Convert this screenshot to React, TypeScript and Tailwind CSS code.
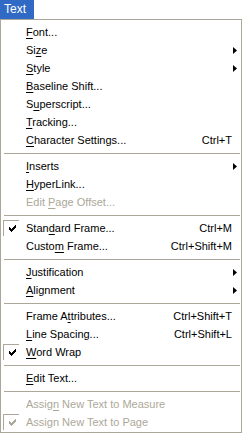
import React from 'react';

type Item =
    | { sep: true }
    | {
          sep?: false;
          label: string;
          u?: number; // index of underlined access key
          shortcut?: string;
          sub?: boolean;
          checked?: boolean;
          disabled?: boolean;
      };

const items: Item[] = [
    { label: 'Font...', u: 0 },
    { label: 'Size', u: 2, sub: true },
    { label: 'Style', u: 0, sub: true },
    { label: 'Baseline Shift...', u: 0 },
    { label: 'Superscript...', u: 1 },
    { label: 'Tracking...', u: 0 },
    { label: 'Character Settings...', u: 0, shortcut: 'Ctrl+T' },
    { sep: true },
    { label: 'Inserts', u: 0, sub: true },
    { label: 'HyperLink...', u: 0 },
    { label: 'Edit Page Offset...', u: 5, disabled: true },
    { sep: true },
    { label: 'Standard Frame...', u: 4, shortcut: 'Ctrl+M', checked: true },
    { label: 'Custom Frame...', u: 5, shortcut: 'Ctrl+Shift+M' },
    { sep: true },
    { label: 'Justification', u: 0, sub: true },
    { label: 'Alignment', u: 0, sub: true },
    { sep: true },
    { label: 'Frame Attributes...', u: 7, shortcut: 'Ctrl+Shift+T' },
    { label: 'Line Spacing...', u: 0, shortcut: 'Ctrl+Shift+L' },
    { label: 'Word Wrap', u: 0, checked: true },
    { sep: true },
    { label: 'Edit Text...', u: 0 },
    { sep: true },
    { label: 'Assign New Text to Measure', u: 5, disabled: true },
    { label: 'Assign New Text to Page', disabled: true, checked: true },
];

function Label({ text, u }: { text: string; u?: number }) {
    if (u === undefined) return <>{text}</>;
    return (
        <>
            {text.slice(0, u)}
            <span className="underline underline-offset-[2px]">{text[u]}</span>
            {text.slice(u + 1)}
        </>
    );
}

function Check({ disabled }: { disabled?: boolean }) {
    return (
        <div className="w-[16px] h-[16px] ml-[2px] border-l border-t border-[#aca899] flex items-center justify-center">
            <svg width="7" height="7" viewBox="0 0 7 7" className="ml-[1px]">
                <path
                    d="M0 2h1v1h1v1h1v-1h1v-1h1v-1h1v-1h1v3h-1v1h-1v1h-1v1h-1v1h-1v-1h-1v-1h-1v-1h-1z"
                    fill={disabled ? '#aca899' : '#000'}
                />
            </svg>
        </div>
    );
}

function Arrow() {
    return (
        <svg width="4" height="7" viewBox="0 0 4 7" className="ml-[1px]">
            <path d="M0 0L4 3.5L0 7z" fill="#000" />
        </svg>
    );
}

export default function App() {
    return (
        <div className="w-[246px] h-[433px] bg-white text-[11px] text-black" style={{ fontFamily: '"Liberation Sans", Arial, sans-serif' }}>
            {/* Menu bar title */}
            <div className="h-[19px] w-[34px] bg-[#316ac5] text-white pl-[4px] text-[12px] leading-[19px]">Text</div>

            {/* Dropdown */}
            <div className="w-[242px] border border-[#aca899] pt-[3px] pb-[1px] bg-white">
                {items.map((it, i) =>
                    it.sep ? (
                        <div key={i} className="h-[8px] flex items-center pl-[3px] pr-[1px]">
                            <div className="h-px w-full bg-[#aca899]" />
                        </div>
                    ) : (
                        <div key={i} className={`h-[18px] flex items-center ${it.disabled ? 'text-[#aca899]' : ''}`}>
                            <div className="w-[25px] h-full flex items-center">{it.checked && <Check disabled={it.disabled} />}</div>
                            <div className="flex-1 whitespace-nowrap">
                                <Label text={it.label} u={it.u} />
                            </div>
                            {it.shortcut && <div className="whitespace-nowrap">{it.shortcut}</div>}
                            <div className="w-[9px] flex items-center">{it.sub && <Arrow />}</div>
                        </div>
                    )
                )}
            </div>
        </div>
    );
}
